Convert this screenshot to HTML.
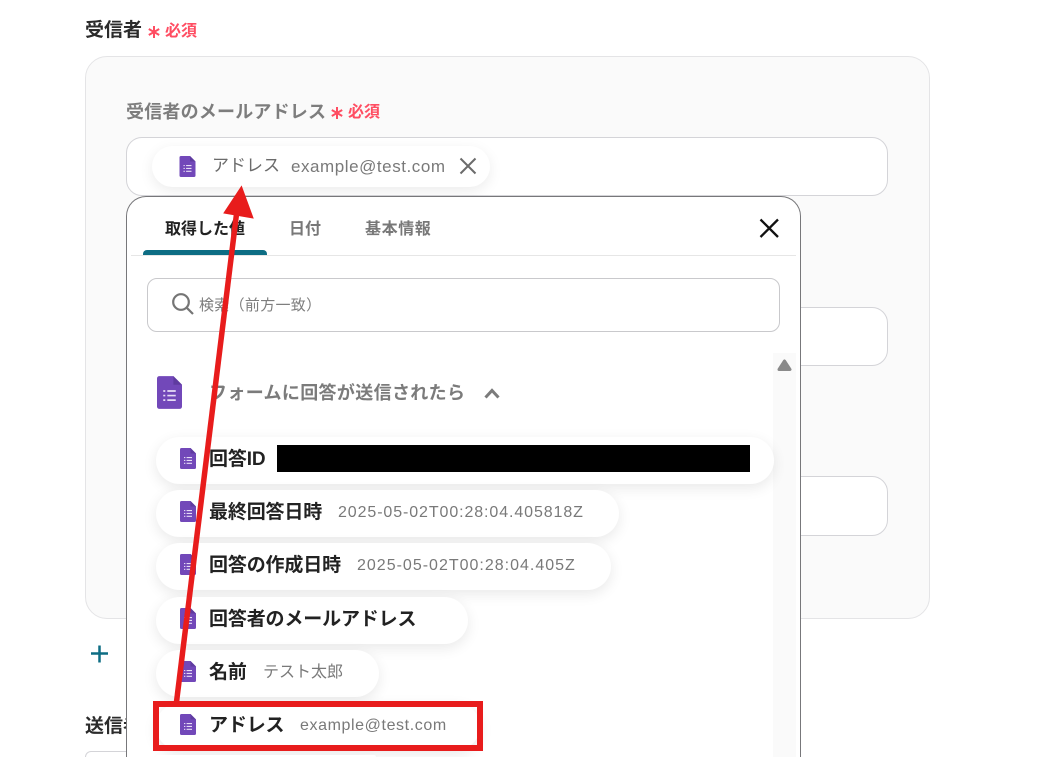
<!DOCTYPE html>
<html lang="ja">
<head>
<meta charset="utf-8">
<style>
html,body{margin:0;padding:0;background:#fff;width:1062px;height:757px;overflow:hidden;}
#w{width:1062px;height:757px;position:relative;overflow:hidden;font-family:"Liberation Sans","Noto Sans CJK JP",sans-serif;color:#222;}
.a{position:absolute;white-space:nowrap;}
.b{font-weight:700;}
.req{color:#ff4d62;font-weight:700;font-size:16px;line-height:22px;}
.input{position:absolute;background:#fff;border:1px solid #d4d4d8;border-radius:16px;box-sizing:border-box;}
.pill{position:absolute;left:156px;background:#fff;border-radius:24px;height:47px;box-shadow:0 4px 14px rgba(0,0,0,.09);}
.pill .n{position:absolute;left:53px;top:10px;font-size:19px;font-weight:700;color:#222;white-space:nowrap;line-height:26px;letter-spacing:-.15px;}
.pill .v{position:absolute;top:12px;font-size:16px;color:#797979;white-space:nowrap;line-height:22px;}
.pill svg{position:absolute;left:24px;top:11px;}
</style>
</head>
<body>
<div id="w">
<svg width="0" height="0" style="position:absolute"><defs>
<symbol id="f" viewBox="0 0 16 21"><path d="M1.500 0H10.500L16 5.500V19.500A1.500 1.500 0 0 1 14.500 21H1.500A1.500 1.500 0 0 1 0 19.500V1.500A1.500 1.500 0 0 1 1.500 0Z" fill="#7248b9"/><path d="M10.500 0L16 5.500H10.500Z" fill="#5f3ba0"/><path d="M4 9h1.300v1.100H4ZM6.600 9h5.400v1.100H6.600ZM4 11.900h1.300v1.100H4ZM6.600 11.900h5.400v1.100H6.600ZM4 14.800h1.300v1.100H4ZM6.600 14.800h5.400v1.100H6.600Z" fill="#e6dcf5"/></symbol>
<symbol id="s" viewBox="0 0 14 14"><path d="M7 1V13M1.800 4L12.200 10M12.200 4L1.800 10" stroke="#ff4d62" stroke-width="2" fill="none"/></symbol>
</defs></svg>

<div class="a b" style="left:85px;top:18px;font-size:19px;line-height:26px;color:#2b2b2b;">受信者</div>
<svg class="a" style="left:147px;top:25px" width="14" height="14"><use href="#s"/></svg>
<div class="a req" style="left:165px;top:21px;">必須</div>

<div class="a" style="left:85px;top:56px;width:845px;height:563px;box-sizing:border-box;background:#fafafa;border:1px solid #e4e4e6;border-radius:22px;"></div>

<div class="a b" style="left:126px;top:99px;font-size:18px;line-height:26px;color:#7d7d7d;letter-spacing:.2px;">受信者のメールアドレス</div>
<svg class="a" style="left:330px;top:106px" width="14" height="14"><use href="#s"/></svg>
<div class="a req" style="left:348px;top:102px;">必須</div>

<div class="input" style="left:126px;top:137px;width:762px;height:59px;"></div>
<div class="input" style="left:700px;top:307px;width:188px;height:59px;"></div>
<div class="input" style="left:700px;top:476px;width:188px;height:60px;"></div>

<div class="a" style="left:152px;top:146px;width:338px;height:41px;background:#fff;border-radius:21px;box-shadow:0 4px 14px rgba(0,0,0,.08);"></div>
<svg class="a" style="left:179px;top:156px" width="17" height="21"><use href="#f"/></svg>
<div class="a" style="left:212px;top:154px;font-size:17px;line-height:24px;color:#6b6b6b;">アドレス</div>
<div class="a" style="left:291px;top:156px;font-size:17px;line-height:22px;color:#797979;letter-spacing:.55px;">example@test.com</div>
<svg class="a" style="left:459px;top:157px" width="18" height="18" fill="none" stroke="#6b6b6b" stroke-width="2"><path d="M1.500 1.500L16.500 16.500M16.500 1.500L1.500 16.500"/></svg>

<div class="a b" style="left:85px;top:714px;font-size:19px;line-height:26px;color:#2b2b2b;">送信者</div>
<svg class="a" style="left:90px;top:644px" width="20" height="20" stroke="#0d6d84" stroke-width="2.500" fill="none"><path d="M9.500 1.500V18.500M1 9.500H18"/></svg>
<div class="input" style="left:85px;top:751px;width:300px;height:6px;border-bottom:0;border-radius:16px 16px 0 0;"></div>

<!-- modal -->
<div class="a" style="left:126px;top:196px;width:675px;height:561px;box-sizing:border-box;background:#fff;border:1px solid #77777a;border-bottom:0;border-radius:20px 20px 0 0;"></div>
<div class="a b" style="left:165px;top:218px;font-size:16px;line-height:24px;color:#222;">取得した値</div>
<div class="a b" style="left:289px;top:218px;font-size:16px;line-height:24px;color:#787878;">日付</div>
<div class="a b" style="left:365px;top:218px;font-size:16px;line-height:24px;color:#787878;letter-spacing:.6px;">基本情報</div>
<div class="a" style="left:131px;top:255px;width:665px;height:1px;background:#e6e6e6;"></div>
<div class="a" style="left:143px;top:250px;width:124px;height:5px;background:#0d6d84;border-radius:4px 4px 0 0;"></div>
<svg class="a" style="left:759px;top:218px" width="21" height="21" fill="none" stroke="#111" stroke-width="2.300"><path d="M1.500 1.500L19 19M19 1.500L1.500 19"/></svg>

<div class="a" style="left:147px;top:278px;width:633px;height:54px;box-sizing:border-box;background:#fff;border:1px solid #c9c9cc;border-radius:10px;"></div>
<svg class="a" style="left:171px;top:292px" width="24" height="24" fill="none" stroke="#757575" stroke-width="2.200"><circle cx="10" cy="10" r="7.800"/><path d="M15.800 15.800L22 22"/></svg>
<div class="a" style="left:199px;top:295px;font-size:15px;line-height:22px;color:#7e7e7e;letter-spacing:.3px;">検索（前方一致）</div>

<div class="a" style="left:773px;top:353px;width:23px;height:404px;background:#fafafa;"></div>
<svg class="a" style="left:776px;top:358px" width="17" height="14"><path d="M8.500 3L14 11.500H3Z" fill="#8a8a8a" stroke="#8a8a8a" stroke-width="3" stroke-linejoin="round"/></svg>

<svg class="a" style="left:157px;top:375px" width="25" height="35"><use href="#f"/></svg>
<div class="a b" style="left:209px;top:380px;font-size:18px;line-height:26px;color:#7b7b7b;letter-spacing:.35px;">フォームに回答が送信されたら</div>
<svg class="a" style="left:484px;top:388px" width="16" height="11" fill="none" stroke="#7b7b7b" stroke-width="3"><path d="M1.500 9.500L8 2.500L14.500 9.500"/></svg>

<div class="pill" style="top:437px;width:618px;"><svg width="16" height="21"><use href="#f"/></svg><div class="n">回答ID</div><div style="position:absolute;left:121px;top:8px;width:473px;height:27px;background:#000;"></div></div>
<div class="pill" style="top:490px;width:463px;"><svg width="16" height="21"><use href="#f"/></svg><div class="n">最終回答日時</div><div class="v" style="left:182px;letter-spacing:.9px;">2025-05-02T00:28:04.405818Z</div></div>
<div class="pill" style="top:543px;width:455px;"><svg width="16" height="21"><use href="#f"/></svg><div class="n">回答の作成日時</div><div class="v" style="left:201px;letter-spacing:1px;">2025-05-02T00:28:04.405Z</div></div>
<div class="pill" style="top:597px;width:312px;"><svg width="16" height="21"><use href="#f"/></svg><div class="n">回答者のメールアドレス</div></div>
<div class="pill" style="top:650px;width:223px;"><svg width="16" height="21"><use href="#f"/></svg><div class="n">名前</div><div class="v" style="left:107px;">テスト太郎</div></div>
<div class="pill" style="top:703px;width:324px;height:47px;"><svg width="16" height="21"><use href="#f"/></svg><div class="n">アドレス</div><div class="v" style="left:144px;letter-spacing:.6px;">example@test.com</div></div>
<div class="pill" style="top:755px;width:220px;height:2px;border-radius:24px 24px 0 0;"></div>

<!-- annotations -->
<svg class="a" style="left:0;top:0" width="1062" height="757" fill="none">
<path d="M176.500 702L237 210" stroke="#e81c1c" stroke-width="5.500"/>
<path d="M241.500 186.500L253 218L224 213Z" fill="#e81c1c" stroke="#e81c1c" stroke-width="1"/>
<rect x="156" y="704" width="324" height="44" stroke="#e81c1c" stroke-width="6"/>
</svg>
</div>
</body>
</html>
